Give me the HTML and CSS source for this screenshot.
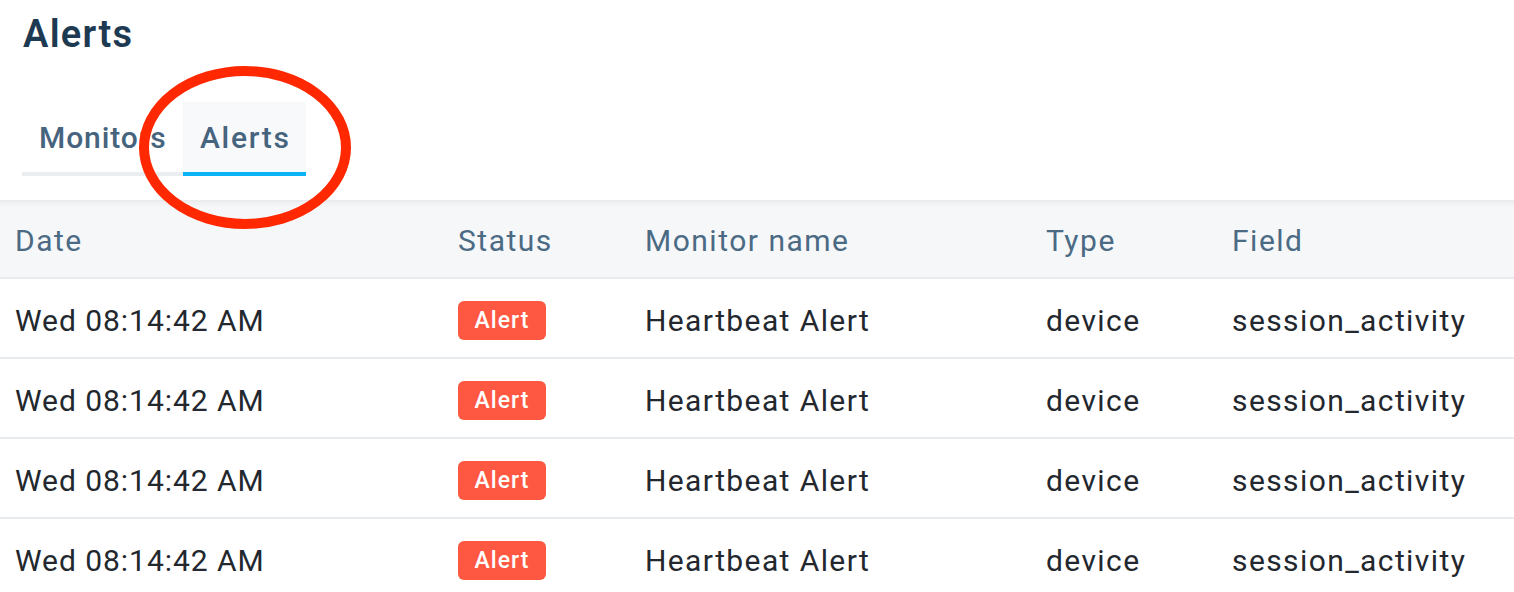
FILE: index.html
```html
<!DOCTYPE html>
<html lang="en">
<head>
<meta charset="utf-8">
<title>Alerts</title>
<link rel="stylesheet" href="styles.css">
</head>
<body>
<div class="page">
  <h1 class="title">Alerts</h1>
  <div class="tabs">
    <div class="tab">Monitors</div>
    <div class="tab active">Alerts</div>
    <svg class="annot" width="230" height="180" viewBox="0 0 230 180"><ellipse cx="115" cy="89.5" rx="101" ry="76.5" fill="none" stroke="#ff2800" stroke-width="10"/></svg>
  </div>
  <div class="table">
    <div class="row head">
      <div class="cell">Date</div>
      <div class="cell">Status</div>
      <div class="cell">Monitor name</div>
      <div class="cell">Type</div>
      <div class="cell">Field</div>
    </div>
    <div class="row">
      <div class="cell date">Wed 08:14:42 AM</div>
      <div class="cell"><span class="badge">Alert</span></div>
      <div class="cell">Heartbeat Alert</div>
      <div class="cell">device</div>
      <div class="cell">session_activity</div>
    </div>
    <div class="row">
      <div class="cell date">Wed 08:14:42 AM</div>
      <div class="cell"><span class="badge">Alert</span></div>
      <div class="cell">Heartbeat Alert</div>
      <div class="cell">device</div>
      <div class="cell">session_activity</div>
    </div>
    <div class="row">
      <div class="cell date">Wed 08:14:42 AM</div>
      <div class="cell"><span class="badge">Alert</span></div>
      <div class="cell">Heartbeat Alert</div>
      <div class="cell">device</div>
      <div class="cell">session_activity</div>
    </div>
    <div class="row">
      <div class="cell date">Wed 08:14:42 AM</div>
      <div class="cell"><span class="badge">Alert</span></div>
      <div class="cell">Heartbeat Alert</div>
      <div class="cell">device</div>
      <div class="cell">session_activity</div>
    </div>
  </div>
</div>
</body>
</html>
```
FILE: styles.css
```css
html, body {
  margin: 0;
  padding: 0;
  background: #ffffff;
}
body {
  font-family: Roboto, "Liberation Sans", sans-serif;
  overflow: hidden;
}
.page {
  width: 1514px;
  height: 592px;
  overflow: hidden;
}
.title {
  margin: 0;
  padding: 12px 0 0 23px;
  height: 90px;
  box-sizing: border-box;
  font-size: 38px;
  line-height: 45px;
  font-weight: 600;
  color: #1d3a52;
  letter-spacing: 1.3px;
}
.tabs {
  position: relative;
  display: flex;
  margin-left: 22px;
  margin-top: 12px;
  height: 74px;
}
.tab {
  box-sizing: border-box;
  height: 74px;
  padding: 0 17px;
  display: flex;
  align-items: center;
  font-size: 30px;
  font-weight: 500;
  color: #46647e;
  letter-spacing: 0.9px;
  border-bottom: 4px solid #ebeef1;
}
.tab:first-child {
  width: 161px;
}
.tab.active {
  width: 123px;
  background: #f8f9fa;
  border-bottom-color: #0bb4f2;
  letter-spacing: 1.7px;
}
.annot {
  position: absolute;
  left: 108px;
  top: -44px;
  pointer-events: none;
}
.table {
  margin-top: 24px;
}
.row {
  display: grid;
  grid-template-columns: 443px 187px 401px 186px 1fr;
  padding-left: 15px;
  height: 78px;
  border-bottom: 2px solid #e9ecef;
  align-items: center;
  font-size: 30px;
  color: #23282e;
  letter-spacing: 1.4px;
}
.row.head {
  height: 77px;
  background: #f6f7f9;
  color: #4b6a84;
  box-shadow: inset 0 8px 6px -6px rgba(0, 0, 0, 0.07);
  letter-spacing: 1.5px;
}
.cell {
  white-space: nowrap;
  padding-top: 5px;
}
.cell.date {
  letter-spacing: 0.95px;
}
.head .cell {
  padding-top: 3px;
}
.badge {
  display: inline-block;
  width: 88px;
  height: 39px;
  box-sizing: border-box;
  background: #ff5842;
  border-radius: 6px;
  color: #ffffff;
  font-size: 23px;
  font-weight: 500;
  line-height: 39px;
  text-align: center;
  letter-spacing: 1px;
  vertical-align: middle;
}
```
